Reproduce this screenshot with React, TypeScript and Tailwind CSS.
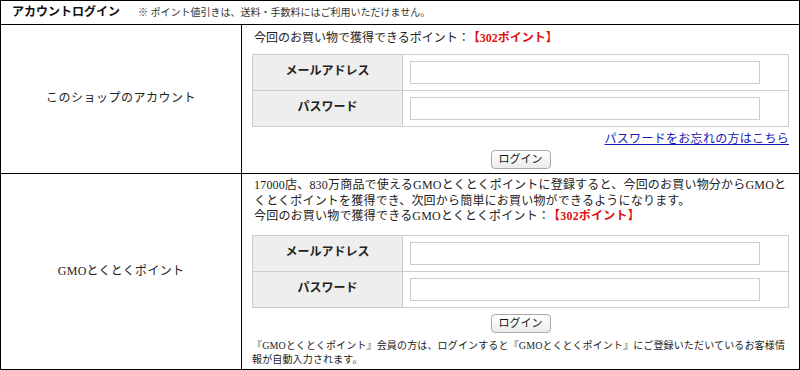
const FONT = { fontFamily: '"Liberation Serif", "Noto Sans CJK JP", serif' };

const LoginTable = () => (
  <div className="border border-[#ccc]">
    <div className="flex border-b border-[#ccc]">
      <div className="w-[150px] shrink-0 bg-[#eee] border-r border-[#ccc] flex items-center justify-center font-bold">
        メールアドレス
      </div>
      <div className="pl-[7px] py-[6px]">
        <input type="text" className="block w-[350px] h-[23px] border border-[#ccc] bg-white outline-none" />
      </div>
    </div>
    <div className="flex">
      <div className="w-[150px] shrink-0 bg-[#eee] border-r border-[#ccc] flex items-center justify-center font-bold">
        パスワード
      </div>
      <div className="pl-[7px] py-[6px]">
        <input type="password" className="block w-[350px] h-[23px] border border-[#ccc] bg-white outline-none" />
      </div>
    </div>
  </div>
);

const LoginButton = ({ className }: { className: string }) => (
  <div className={`flex justify-center ${className}`}>
    <button className="h-[19px] px-[7px] text-[11px] leading-none border border-[#a9a9a9] rounded-[4px] bg-gradient-to-b from-white to-[#ececec] text-[#111]">
      ログイン
    </button>
  </div>
);

const Points = () => <span className="ml-[4px] text-[#dd1111] font-bold">【302ポイント】</span>;

export default function App() {
  return (
    <div style={FONT} className="w-[800px] h-[370px] flex flex-col border border-black bg-white text-[12px] leading-[15.5px] text-[#222]">
      <div className="h-[24px] shrink-0 flex items-center border-b border-black pl-[11px]">
        <span className="font-bold text-[12px] text-[#111]">アカウントログイン</span>
        <span className="ml-[18px] text-[10px] text-[#333]">※ ポイント値引きは、送料・手数料にはご利用いただけません。</span>
      </div>

      <div className="h-[149px] shrink-0 flex border-b border-black">
        <div className="w-[241px] shrink-0 border-r border-black flex items-center justify-center tracking-[0.5px]">
          このショップのアカウント
        </div>
        <div className="flex-1 px-[10px] pt-[6px]">
          <p className="pl-[2px]">
            今回のお買い物で獲得できるポイント：<Points />
          </p>
          <div className="mt-[7px]">
            <LoginTable />
          </div>
          <p className="mt-[5px] text-right tracking-[0.3px]">
            <a href="#" className="text-[#1a1ab8] underline">パスワードをお忘れの方はこちら</a>
          </p>
          <LoginButton className="mt-[3px]" />
        </div>
      </div>

      <div className="flex-1 flex">
        <div className="w-[241px] shrink-0 border-r border-black flex items-center justify-center tracking-[0.3px]">
          GMOとくとくポイント
        </div>
        <div className="flex-1 px-[10px] pt-[4px]">
          <p className="pl-[2px] whitespace-nowrap tracking-[0.2px]">
            17000店、830万商品で使えるGMOとくとくポイントに登録すると、今回のお買い物分からGMOと
            <br />
            くとくポイントを獲得でき、次回から簡単にお買い物ができるようになります。
            <br />
            今回のお買い物で獲得できるGMOとくとくポイント：<Points />
          </p>
          <div className="mt-[10px]">
            <LoginTable />
          </div>
          <LoginButton className="mt-[6px]" />
          <p className="mt-[6px] text-[10px] leading-[14px] whitespace-nowrap tracking-[0.15px]">
            『GMOとくとくポイント』会員の方は、ログインすると『GMOとくとくポイント』にご登録いただいているお客様情
            <br />
            報が自動入力されます。
          </p>
        </div>
      </div>
    </div>
  );
}
